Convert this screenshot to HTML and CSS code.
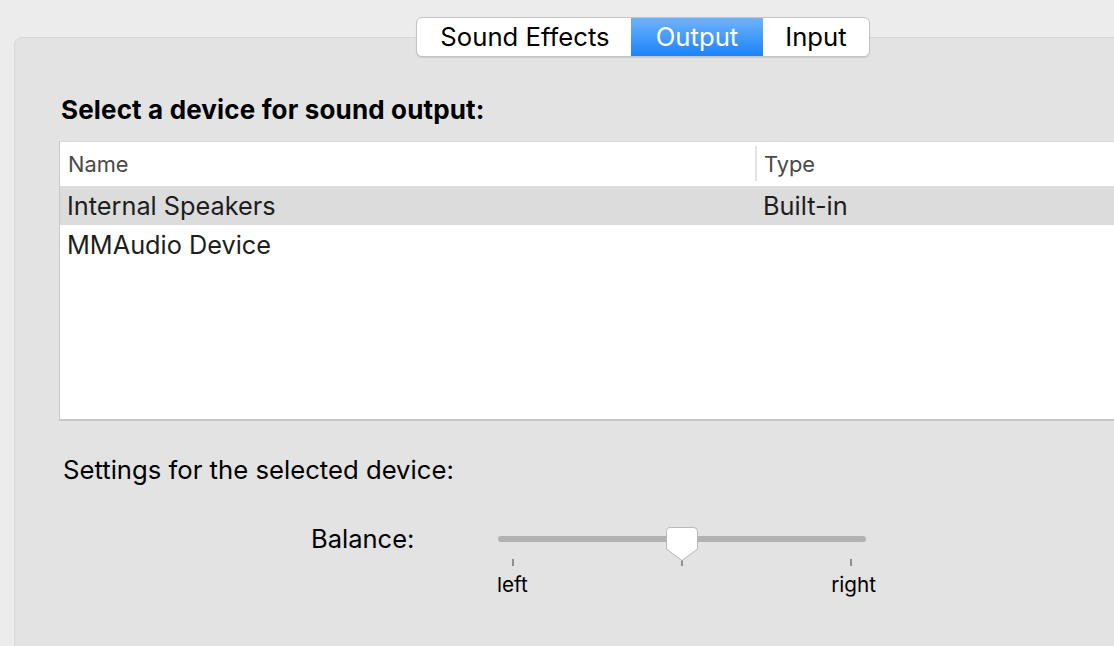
FILE: index.html
```html
<!DOCTYPE html>
<html>
<head>
<meta charset="utf-8">
<link rel="stylesheet" href="styles.css">
</head>
<body>
<div class="window">
  <div class="tabs-row">
    <div class="segmented">
      <div class="seg seg-first">Sound Effects</div>
      <div class="seg seg-active">Output</div>
      <div class="seg seg-last">Input</div>
    </div>
  </div>
  <div class="panel">
    <div class="heading">Select a device for sound output:</div>
    <div class="table">
      <div class="thead">
        <div class="col col-name">Name</div>
        <div class="col col-type"><span class="divider"></span>Type</div>
      </div>
      <div class="row row-selected">
        <div class="col col-name">Internal Speakers</div>
        <div class="col col-type">Built-in</div>
      </div>
      <div class="row">
        <div class="col col-name">MMAudio Device</div>
        <div class="col col-type"></div>
      </div>
    </div>
    <div class="settings">Settings for the selected device:</div>
    <div class="balance">
      <div class="balance-label">Balance:</div>
      <div class="slider">
        <div class="track"></div>
        <svg class="thumb" width="33" height="36" viewBox="0 0 33 36">
          <path d="M4.5 0.5 H27.5 A4 4 0 0 1 31.5 4.5 V22 L16 33.5 L0.5 22 V4.5 A4 4 0 0 1 4.5 0.5 Z" fill="#ffffff" stroke="#b9b9b9" stroke-width="1"/>
        </svg>
        <div class="ticks">
          <span class="tick"></span>
          <span class="tick"></span>
          <span class="tick"></span>
        </div>
        <div class="tick-labels">
          <span>left</span>
          <span>right</span>
        </div>
      </div>
    </div>
  </div>
</div>
</body>
</html>
```

FILE: styles.css
```css
html, body {
  margin: 0;
  padding: 0;
  background: #ececec;
  overflow: hidden;
  width: 1114px;
  height: 646px;
}
.window {
  padding-top: 17px;
  padding-left: 14px;
  font-family: Inter, "Liberation Sans", sans-serif;
  color: #1a1a1a;
}
.tabs-row {
  width: 1258px;
  display: flex;
  justify-content: center;
  position: relative;
  z-index: 2;
}
.segmented {
  display: flex;
  height: 38px;
  border: 1px solid #c4c4c4;
  border-radius: 6px;
  background: #ffffff;
  box-shadow: 0 1px 1px rgba(0,0,0,0.12);
  overflow: hidden;
}
.seg {
  font-size: 25.7px;
  line-height: 38px;
  color: #000;
  display: flex;
  justify-content: center;
}
.seg-first { width: 214px; padding-left: 2px; box-sizing: border-box; }
.seg-active {
  width: 132px;
  color: #fff;
  background: linear-gradient(#6fb4fb, #1b82fb);
}
.seg-last { width: 106px; }
.panel {
  width: 1258px;
  height: 640px;
  margin-top: -20px;
  background: #e3e3e3;
  border: 1px solid #d6d6d6;
  border-radius: 8px 8px 0 0;
  box-sizing: border-box;
  padding: 57px 0 0 44px;
}
.heading {
  font-size: 26px;
  font-weight: 700;
  letter-spacing: 0.15px;
  line-height: 30px;
  color: #000;
  margin-left: 2px;
}
.table {
  margin-top: 16px;
  width: 1200px;
  height: 280px;
  background: #fff;
  border-left: 1px solid #c9c9c9;
  border-top: 1px solid #d9d9d9;
  border-bottom: 2px solid #c6c6c6;
  box-sizing: border-box;
}
.thead {
  display: flex;
  height: 44px;
  font-size: 21.8px;
  color: #4a4a4a;
}
.thead .col {
  display: flex;
  align-items: center;
}
.thead .col-name { padding-left: 8px; }
.thead .col-type { position: relative; padding-left: 9px; }
.divider {
  position: absolute;
  left: 0;
  top: 4px;
  width: 2px;
  height: 35px;
  background: #e2e2e2;
}
.col-name { width: 695px; box-sizing: border-box; padding-left: 7px; }
.col-type { flex: 1; box-sizing: border-box; padding-left: 8px; }
.row {
  display: flex;
  height: 39px;
  align-items: center;
  font-size: 25.3px;
  color: #1e1e1e;
}
.row-selected { background: #dcdcdc; }
.settings {
  margin-top: 34px;
  margin-left: 4px;
  font-size: 25.7px;
  line-height: 30px;
  color: #000;
}
.balance {
  display: flex;
  margin-top: 39px;
  margin-left: 252px;
}
.balance-label {
  font-size: 25.5px;
  line-height: 30px;
  width: 187px;
  color: #000;
}
.slider {
  width: 368px;
  position: relative;
  padding-top: 12px;
}
.track {
  height: 6px;
  border-radius: 3px;
  background: #b2b2b2;
}
.thumb {
  position: absolute;
  left: 168px;
  top: 2.5px;
  filter: drop-shadow(0 0.5px 0.5px rgba(0,0,0,0.15));
}
.ticks {
  display: flex;
  justify-content: space-between;
  padding: 0 14px 0 14px;
  margin-top: 17px;
}
.tick {
  width: 2px;
  height: 7px;
  background: #8e8e8e;
}
.tick-labels {
  display: flex;
  justify-content: space-between;
  font-size: 20.7px;
  line-height: 24px;
  color: #000;
  margin-top: 7px;
  margin-right: -10px;
  margin-left: -1px;
}
```
